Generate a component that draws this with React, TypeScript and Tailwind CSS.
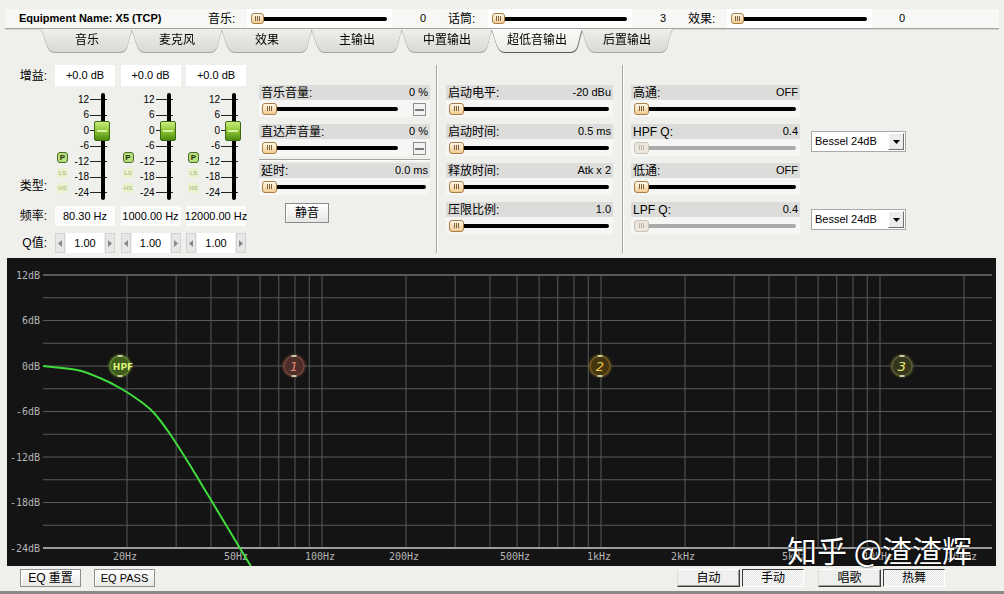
import React from 'react';

// ---- small building blocks ----

const Thumb = ({ disabled = false, small = false }: { disabled?: boolean; small?: boolean }) => (
  <div
    className={`relative z-10 flex shrink-0 items-center justify-center gap-[1px] rounded-[3px] border ${
      small ? 'h-[11px] w-[13px]' : 'h-[12px] w-[15px]'
    } ${disabled ? 'border-[#cbc4b6] bg-[#ece7de]' : 'border-[#a97d45] bg-linear-to-b from-[#fff7e8] to-[#f2cd92]'}`}
  >
    {[0, 1, 2].map((i) => (
      <span key={i} className={`h-[5px] w-px ${disabled ? 'bg-[#bdb5a6]' : 'bg-[#80603a]'}`} />
    ))}
  </div>
);

const Track = ({ disabled = false }: { disabled?: boolean }) => (
  <div className={`-ml-px h-[4px] flex-1 rounded-r-full ${disabled ? 'bg-[#ababab]' : 'bg-black'}`} />
);

const MinusBox = () => (
  <span className="ml-[15px] mt-[2px] flex h-[13px] w-[13px] shrink-0 items-center justify-center border border-[#8c8c8c] bg-[#f3f3f3]">
    <span className="h-[2px] w-[9px] bg-[#7a7a7a]" />
  </span>
);

interface GroupProps {
  label: string;
  value: string;
  minus?: boolean;
  disabled?: boolean;
}

const ParamGroup: React.FC<GroupProps> = ({ label, value, minus, disabled }) => (
  <div className="flex h-[32px] flex-col bg-[#f6f6f4]">
    <div className="flex h-[15px] items-center justify-between bg-[#dcdcdb] px-[2px] leading-none">
      <span className="text-[12px]">{label}</span>
      <span className="text-[11px]">{value}</span>
    </div>
    <div className="flex h-[17px] items-center pl-[3px] pr-[4px]">
      <Thumb disabled={disabled} />
      <Track disabled={disabled} />
      {minus && <MinusBox />}
    </div>
  </div>
);

const TopSlider = ({ w }: { w: string }) => (
  <div className={`flex h-[19px] items-center bg-white pl-[4px] pr-[5px] ${w}`}>
    <Thumb small />
    <Track />
  </div>
);

const Select = () => (
  <div className="flex h-[21px] w-[95px] items-center border border-[#a8a8a8] bg-white">
    <span className="flex-1 pl-[3px] text-[11px] leading-none">Bessel 24dB</span>
    <span className="mr-px flex h-[17px] w-[16px] items-center justify-center border border-b-[#6f6f6f] border-l-white border-r-[#6f6f6f] border-t-white bg-[#ececec]">
      <svg width="7" height="4" viewBox="0 0 7 4">
        <path d="M0 0h7L3.5 4z" fill="#000" />
      </svg>
    </span>
  </div>
);

const RowLabel = ({ children }: { children: React.ReactNode }) => (
  <div className="w-[36px] shrink-0 pr-[8px] text-right text-[12px] leading-none">{children}</div>
);

const SCALE = ['12', '6', '0', '-6', '-12', '-18', '-24'];

const Fader = () => (
  <div className="relative flex h-[112px] w-[60px]">
    <div className="flex w-[13px] flex-col items-end gap-[5px] pt-[62px]">
      <span className="flex h-[11px] w-[11px] items-center justify-center rounded-[3px] border border-[#4b6b2b] bg-[#b9e07c] text-[8px] font-bold leading-none text-[#1f3010]">
        P
      </span>
      <span className="flex h-[10px] w-[11px] items-center justify-center rounded-[3px] bg-[#e9f1cf] text-[6px] leading-none text-[#a3b46f]">
        LS
      </span>
      <span className="flex h-[10px] w-[11px] items-center justify-center rounded-[3px] bg-[#e9f1cf] text-[6px] leading-none text-[#a3b46f]">
        HS
      </span>
    </div>
    <div className="flex flex-col pt-[2px]">
      {SCALE.map((s) => (
        <div key={s} className="flex h-[15.5px] items-center">
          <span className="w-[22px] pr-[1px] text-right text-[10px] leading-none">{s}</span>
          <span className="h-px w-[17px] bg-[#222]" />
        </div>
      ))}
    </div>
    <div className="absolute left-[46px] top-[3px] h-[107px] w-[4px] rounded-full bg-black" />
    <div className="absolute left-[39px] top-[31px] h-[20px] w-[16px] overflow-hidden rounded-[2px] border border-[#3c6a12] bg-linear-to-b from-[#c9ec7a] via-[#8cc434] to-[#4f8b12]">
      <span className="absolute inset-x-[2px] top-[8px] h-[2px] bg-[#d9f2a2]" />
    </div>
  </div>
);

const Arrow = ({ dir }: { dir: 'l' | 'r' }) => (
  <span className="flex h-[20px] w-[10px] items-center justify-center border border-[#d2d2d2] bg-[#e7e7e7]">
    <svg width="4" height="7" viewBox="0 0 4 7">
      <path d={dir === 'l' ? 'M4 0v7L0 3.5z' : 'M0 0v7l4-3.5z'} fill="#8a8a8a" />
    </svg>
  </span>
);

// ---- graph ----

const fx = (f: number) => 127 + 279 * Math.log10(f / 20);
const dy = (db: number) => 275 + (12 - db) * (273 / 36);

const V_FREQS = [
  20, 30, 40, 50, 60, 70, 80, 90, 100, 200, 300, 400, 500, 600, 700, 800, 900, 1000, 2000, 3000, 4000,
  5000, 6000, 7000, 8000, 9000, 10000, 20000,
];
const DB_LINES = [12, 9, 6, 3, 0, -3, -6, -9, -12, -15, -18, -21, -24];
const DB_LABELS = [12, 6, 0, -6, -12, -18, -24];
const F_LABELS: [number, string][] = [
  [20, '20Hz'],
  [50, '50Hz'],
  [100, '100Hz'],
  [200, '200Hz'],
  [500, '500Hz'],
  [1000, '1kHz'],
  [2000, '2kHz'],
  [5000, '5kHz'],
  [10000, '10kHz'],
  [20000, '20kHz'],
];

// HPF response, sampled by eye from the screen, then smoothed (catmull-rom)
const PTS: [number, number][] = [
  [43, 366], [77, 370], [100, 378], [120, 388], [140, 401], [154, 413],
  [170, 434], [188, 462], [208, 495], [238, 545], [252, 568],
];
const curvePath = () => {
  let d = `M${PTS[0][0]},${PTS[0][1]}`;
  for (let i = 0; i < PTS.length - 1; i++) {
    const p0 = PTS[Math.max(0, i - 1)];
    const p1 = PTS[i];
    const p2 = PTS[i + 1];
    const p3 = PTS[Math.min(PTS.length - 1, i + 2)];
    const c1x = p1[0] + (p2[0] - p0[0]) / 6;
    const c1y = p1[1] + (p2[1] - p0[1]) / 6;
    const c2x = p2[0] - (p3[0] - p1[0]) / 6;
    const c2y = p2[1] - (p3[1] - p1[1]) / 6;
    d += ` C${c1x},${c1y} ${c2x},${c2y} ${p2[0]},${p2[1]}`;
  }
  return d;
};

const Node = ({
  x,
  label,
  fill,
  ring,
  color,
  italic = true,
}: {
  x: number;
  label: string;
  fill: string;
  ring: string;
  color: string;
  italic?: boolean;
}) => (
  <g>
    <circle cx={x} cy={366} r={12.5} fill={ring} opacity={0.3} />
    <circle cx={x} cy={366} r={10} fill={fill} stroke={ring} strokeWidth={1.5} />
    <rect x={x - 2.5} y={355} width={5} height={2} fill="#c9c9a4" />
    <rect x={x - 2.5} y={375} width={5} height={2} fill="#c9c9a4" />
    <text
      x={italic ? x : x + 3}
      y={italic ? 371 : 369.5}
      textAnchor="middle"
      fontSize={italic ? 13 : 9}
      fontStyle={italic ? 'italic' : 'normal'}
      fontWeight={italic ? 'normal' : 'bold'}
      fontFamily="DejaVu Sans, sans-serif"
      fill={color}
    >
      {label}
    </text>
  </g>
);

const Graph = () => (
  <div className="relative mx-[7px] h-[308px] w-[989px] bg-[#141414]">
    <svg className="absolute inset-0" width={989} height={308} viewBox="7 258 989 308">
      {DB_LINES.map((db) => (
        <line
          key={db}
          x1={43}
          x2={992}
          y1={dy(db)}
          y2={dy(db)}
          stroke={db === 12 || db === -24 ? '#9c9c9c' : '#5a5a5a'}
          strokeWidth={db === -24 ? 2 : 1}
        />
      ))}
      {V_FREQS.map((f) => (
        <line key={f} x1={fx(f)} x2={fx(f)} y1={275} y2={547} stroke="#5a5a5a" strokeWidth={1} />
      ))}
      {DB_LABELS.map((db) => (
        <text
          key={db}
          x={40}
          y={dy(db) + 3.5}
          textAnchor="end"
          fontSize={10}
          fontFamily="DejaVu Sans Mono, monospace"
          fill="#b4b4b4"
        >
          {db}dB
        </text>
      ))}
      {F_LABELS.map(([f, l]) => (
        <text
          key={l}
          x={fx(f) - 2}
          y={560}
          textAnchor="middle"
          fontSize={10}
          fontFamily="DejaVu Sans Mono, monospace"
          fill="#b4b4b4"
        >
          {l}
        </text>
      ))}
      <path d={curvePath()} fill="none" stroke="#3fdc3c" strokeWidth={2} />
      <Node x={120} label="HPF" fill="#3e5c1c" ring="#62842e" color="#dcf27a" italic={false} />
      <Node x={294} label="1" fill="#4e2e28" ring="#74443a" color="#d98a6c" />
      <Node x={600} label="2" fill="#463610" ring="#735a22" color="#f2c84a" />
      <Node x={902} label="3" fill="#36361c" ring="#5c5c32" color="#ecec74" />
    </svg>
    <div className="absolute left-[780px] top-[276px] whitespace-nowrap font-['Noto_Sans_CJK_SC',sans-serif] text-[30px] leading-[30px] text-white [text-shadow:0_0_2px_#000,0_0_1px_#000]">
      知乎 @渣渣辉
    </div>
  </div>
);

// ---- sections ----

const TABS = ['音乐', '麦克风', '效果', '主输出', '中置输出', '超低音输出', '后置输出'];
const ACTIVE_TAB = 5;

const TitleBar = () => (
  <div className="mx-[5px] mt-[9px] flex h-[20px] items-center border-b border-[#a3a39f] bg-[#f7f7f5] pl-[14px] text-[12px] leading-none shadow-[0_1px_0_#d6d6d2]">
    <div className="w-[189px] text-[11px] font-bold">Equipment Name: X5 (TCP)</div>
    <div className="w-[39px]">音乐:</div>
    <TopSlider w="w-[145px]" />
    <div className="w-[56px] pr-[22px] text-right text-[11px]">0</div>
    <div className="w-[40px]">话筒:</div>
    <TopSlider w="w-[144px]" />
    <div className="w-[56px] pr-[22px] text-right text-[11px]">3</div>
    <div className="w-[39px]">效果:</div>
    <TopSlider w="w-[145px]" />
    <div className="w-[56px] pr-[23px] text-right text-[11px]">0</div>
  </div>
);

const Tabs = () => (
  <div className="flex h-[24px] pl-[41px]">
    {TABS.map((t, i) => (
      <div
        key={t}
        className={
          i === ACTIVE_TAB
            ? '-mr-[2px] [filter:drop-shadow(0_1.5px_0_rgba(0,0,0,0.55))_drop-shadow(1px_0_0_rgba(0,0,0,0.35))]'
            : '-mr-[2px] [filter:drop-shadow(0_1.5px_0.5px_rgba(0,0,0,0.28))_drop-shadow(0.5px_0_0_rgba(0,0,0,0.2))]'
        }
      >
        <div
          className={`flex h-[23px] w-[92px] items-center justify-center pb-[1px] text-[12px] leading-none [clip-path:path('M0,0_H92_C88,4_88,16_85,20_Q83,23_79,23_H14_Q10,23_8,20_C4,14_3,4_0,0_Z')] ${
            i === ACTIVE_TAB
              ? 'bg-linear-to-b from-[#fbfbf9] to-[#ebebe7]'
              : 'bg-linear-to-b from-[#efefeb] to-[#dadad4]'
          }`}
        >
          {t}
        </div>
      </div>
    ))}
  </div>
);

const EqColumn = () => (
  <div className="flex w-[231px] shrink-0 flex-col pt-[12px]">
    <div className="flex h-[21px] items-center">
      <RowLabel>增益:</RowLabel>
      <div className="grid grid-cols-[60px_60px_60px] gap-x-[5.5px]">
        {[0, 1, 2].map((i) => (
          <div key={i} className="flex h-[21px] items-center justify-center bg-white text-[11px] leading-none">
            +0.0 dB
          </div>
        ))}
      </div>
    </div>
    <div className="mt-[4px] flex h-[112px]">
      <div className="flex w-[36px] flex-col justify-end pb-[10px]">
        <RowLabel>类型:</RowLabel>
      </div>
      <div className="grid grid-cols-[60px_60px_60px] gap-x-[5.5px]">
        <Fader />
        <Fader />
        <Fader />
      </div>
    </div>
    <div className="mt-[4px] flex h-[20px] items-center">
      <RowLabel>频率:</RowLabel>
      <div className="grid grid-cols-[60px_60px_60px] gap-x-[5.5px]">
        {['80.30 Hz', '1000.00 Hz', '12000.00 Hz'].map((f) => (
          <div key={f} className="flex h-[20px] items-center justify-center whitespace-nowrap bg-[#fbfbfb] text-[11px] leading-none">
            {f}
          </div>
        ))}
      </div>
    </div>
    <div className="mt-[7px] flex h-[20px] items-center">
      <RowLabel>Q值:</RowLabel>
      <div className="grid grid-cols-[60px_60px_60px] gap-x-[5.5px]">
        {[0, 1, 2].map((i) => (
          <div key={i} className="flex h-[20px] items-center gap-[1px]">
            <Arrow dir="l" />
            <span className="flex h-[20px] w-[38px] items-center justify-center bg-white text-[11px] leading-none">1.00</span>
            <Arrow dir="r" />
          </div>
        ))}
      </div>
    </div>
  </div>
);

const Separator = ({ ml }: { ml: string }) => (
  <div className={`mt-[12px] h-[188px] w-[2px] shrink-0 border-l border-r border-l-[#a3a39f] border-r-white ${ml}`} />
);

const Controls = () => (
  <div className="flex h-[205px] pl-[19px]">
    <EqColumn />
    <div className="ml-[9px] flex w-[171px] shrink-0 flex-col pt-[32px]">
      <ParamGroup label="音乐音量:" value="0 %" minus />
      <div className="mt-[7px]">
        <ParamGroup label="直达声音量:" value="0 %" minus />
      </div>
      <div className="mt-[3px] h-[2px] border-b border-t border-b-white border-t-[#a3a39f]" />
      <div className="mt-[2px]">
        <ParamGroup label="延时:" value="0.0 ms" />
      </div>
      <button className="ml-[26px] mt-[8px] flex h-[20px] w-[44px] items-center justify-center border border-[#8b8b8b] bg-linear-to-b from-white to-[#e6e6e4] text-[12px] leading-none shadow-[inset_1px_1px_0_#fff]">
        静音
      </button>
    </div>
    <Separator ml="ml-[6px]" />
    <div className="ml-[8px] flex w-[167px] shrink-0 flex-col gap-[7px] pt-[32px]">
      <ParamGroup label="启动电平:" value="-20 dBu" />
      <ParamGroup label="启动时间:" value="0.5 ms" />
      <ParamGroup label="释放时间:" value="Atk x 2" />
      <ParamGroup label="压限比例:" value="1.0" />
    </div>
    <Separator ml="ml-[9px]" />
    <div className="ml-[7px] flex w-[169px] shrink-0 flex-col gap-[7px] pt-[32px]">
      <ParamGroup label="高通:" value="OFF" />
      <ParamGroup label="HPF Q:" value="0.4" disabled />
      <ParamGroup label="低通:" value="OFF" />
      <ParamGroup label="LPF Q:" value="0.4" disabled />
    </div>
    <div className="ml-[11px] flex flex-col pt-[78px]">
      <Select />
      <div className="mt-[57px]">
        <Select />
      </div>
    </div>
  </div>
);

const raised =
  'border border-b-[#3e3e3e] border-l-[#dcdcdc] border-r-[#3e3e3e] border-t-white bg-[#efefed] shadow-[inset_-1px_-1px_0_#a0a0a0]';
const pressed =
  'border border-b-white border-l-[#3e3e3e] border-r-white border-t-[#3e3e3e] bg-[repeating-conic-gradient(#ffffff_0_25%,#e2e2e2_0_50%)] [background-size:2px_2px]';

const BottomBar = () => (
  <div className="flex h-[28px] items-start border-b-[3px] border-[#8a8a8a] pt-[3px] text-[12px] leading-none">
    <button className="ml-[20px] flex h-[18px] w-[61px] items-center justify-center border border-[#8f8f8f] bg-linear-to-b from-white to-[#e8e8e6] shadow-[inset_1px_1px_0_#fff]">
      EQ 重置
    </button>
    <button className="ml-[13px] flex h-[18px] w-[61px] items-center justify-center border border-[#8f8f8f] bg-linear-to-b from-white to-[#e8e8e6] text-[11px] shadow-[inset_1px_1px_0_#fff]">
      EQ PASS
    </button>
    <button className={`ml-[522px] flex h-[18px] w-[63px] items-center justify-center ${raised}`}>自动</button>
    <button className={`ml-[2px] flex h-[18px] w-[62px] items-center justify-center ${pressed}`}>手动</button>
    <button className={`ml-[14px] flex h-[18px] w-[63px] items-center justify-center ${raised}`}>唱歌</button>
    <button className={`ml-[2px] flex h-[18px] w-[62px] items-center justify-center ${pressed}`}>热舞</button>
  </div>
);

export default function App() {
  return (
    <div className="flex h-[594px] w-[1004px] flex-col overflow-hidden bg-[#efefeb] font-['Liberation_Sans','Noto_Sans_CJK_SC',sans-serif] text-black">
      <TitleBar />
      <Tabs />
      <Controls />
      <Graph />
      <BottomBar />
    </div>
  );
}
